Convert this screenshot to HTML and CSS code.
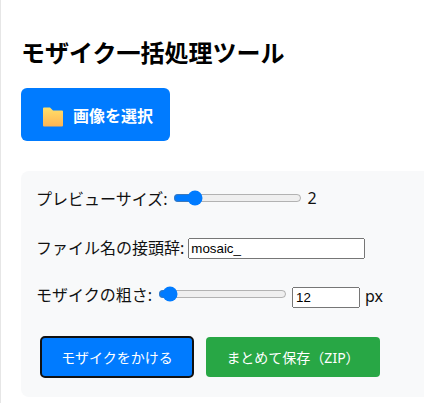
FILE: index.html
```html
<!DOCTYPE html>
<html lang="ja">
<head>
<meta charset="utf-8">
<title>モザイク一括処理ツール</title>
<link rel="stylesheet" href="styles.css">
</head>
<body>
<div class="page">
  <h1 class="title">モザイク一括処理ツール</h1>
  <label class="pick">
    <svg class="folder" viewBox="0 0 20 20" width="20" height="20" aria-hidden="true">
      <defs>
        <linearGradient id="fg" x1="0" y1="0" x2="0" y2="1">
          <stop offset="0" stop-color="#ffe06a"/>
          <stop offset="1" stop-color="#ffb452"/>
        </linearGradient>
      </defs>
      <path d="M0 1.5a1 1 0 0 1 1-1h6l3 3h9a1 1 0 0 1 1 1v14a1 1 0 0 1-1 1H1a1 1 0 0 1-1-1z" fill="url(#fg)"/>
    </svg>
    <span>画像を選択</span>
  </label>
  <section class="panel">
    <div class="row row-first">
      <label class="field">プレビューサイズ:</label>
      <input class="range" type="range" min="1" max="9" value="2">
      <span class="val">2</span>
    </div>
    <div class="row row-name">
      <label class="field">ファイル名の接頭辞:</label>
      <input class="text" type="text" value="mosaic_">
    </div>
    <div class="row row-coarse">
      <label class="field">モザイクの粗さ:</label>
      <input class="range" type="range" min="10" max="60" value="12">
      <input class="num" type="number" value="12">
      <span class="val">px</span>
    </div>
    <div class="actions">
      <button class="btn btn-blue" type="button">モザイクをかける</button>
      <button class="btn btn-green" type="button">まとめて保存（ZIP）</button>
    </div>
  </section>
</div>
</body>
</html>
```
FILE: styles.css
```css
html, body {
  margin: 0;
  padding: 0;
  background: #fff;
}
body {
  height: 403px;
  overflow: hidden;
  font-family: "Noto Sans", "Noto Sans CJK JP", sans-serif;
  font-size: 16px;
  color: #111;
}
.page {
  border-left: 1px solid #e6e6e6;
  height: 403px;
  padding: 36px 0 0 20px;
  box-sizing: border-box;
}
.title {
  margin: 0 0 19px 0;
  font-size: 24px;
  line-height: 33px;
  font-weight: 700;
  color: #000;
}
.pick {
  display: flex;
  align-items: center;
  gap: 10px;
  width: 149px;
  height: 53px;
  box-sizing: border-box;
  padding-left: 22px;
  background: #007bff;
  border-radius: 6px;
  color: #fff;
  font-weight: 700;
  font-size: 16px;
}
.folder {
  display: block;
  margin-top: 4px;
}
.panel {
  margin-top: 30px;
  width: 403px;
  height: 226px;
  box-sizing: border-box;
  padding: 15px 0 0 15px;
  background: #f8f9fa;
  border-radius: 8px 0 0 8px;
}
.row {
  display: flex;
  align-items: center;
  height: 24px;
  color: #111;
}
.row-name { margin-top: 25px; }
.row-coarse { margin-top: 23px; }
.field { margin-right: 4px; }
.range {
  width: 129px;
  margin: 0 6px 0 1px;
  accent-color: #007bff;
}
.row-coarse .range { margin-left: 2px; margin-right: 5px; }
.val { font-size: 16px; }
.text {
  width: 177px;
  height: 21px;
  margin-top: 2px;
  box-sizing: border-box;
  padding: 1px 1px;
  font-family: "Liberation Sans", sans-serif;
  font-size: 13.33px;
}
.num {
  width: 68px;
  height: 21px;
  box-sizing: border-box;
  margin-top: 6px;
  margin-right: 5px;
  padding: 1px 2px;
  font-family: "Liberation Sans", sans-serif;
  font-size: 13.33px;
}
.row-coarse .val { margin-top: 4px; }
.actions {
  display: flex;
  gap: 12px;
  margin-top: 30px;
  padding-left: 4px;
  align-items: center;
}
.btn {
  height: 40px;
  box-sizing: border-box;
  border: 0;
  border-radius: 4px;
  color: #fff;
  font-family: "Noto Sans", "Noto Sans CJK JP", sans-serif;
  font-size: 14px;
  padding: 0;
}
.btn-blue {
  width: 154px;
  height: 42px;
  background: #007bff;
  border: 2px solid #111;
  border-radius: 5px;
}
.btn-green {
  width: 174px;
  background: #28a745;
}
```
